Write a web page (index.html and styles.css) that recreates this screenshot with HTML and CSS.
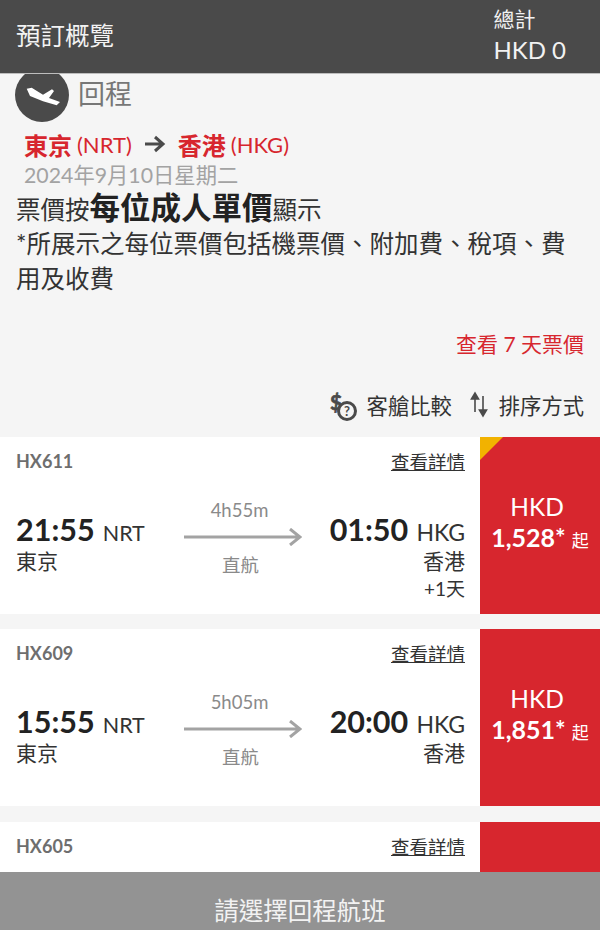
FILE: index.html
```html
<!DOCTYPE html>
<html lang="zh-Hant">
<head>
    <meta charset="UTF-8">
    <meta name="viewport" content="width=device-width, initial-scale=1.0">
    <title>預訂概覽</title>
    <link rel="stylesheet" href="styles.css">
</head>
<body>
    <header class="top-bar">
        <div class="top-title">預訂概覽</div>
        <div class="top-total">
            <div class="total-label">總計</div>
            <div class="total-value">HKD 0</div>
        </div>
    </header>

    <main class="content">
        <div class="leg-head">
            <span class="leg-icon">
                <svg viewBox="0 0 56 56" width="56" height="56">
                    <circle cx="28" cy="28" r="27" fill="#4a4a4a"/>
                    <path d="M12.7 21.7 L17.7 20.7 L29 27.7 L38 22.3 L40 24 L35 31 L46 35 L42.7 38.3 L29 34.3 L16 29 Z" fill="#fff"/>
                </svg>
            </span>
            <span class="leg-name">回程</span>
        </div>
        <div class="route">
            <b>東京</b> (NRT)
            <svg class="route-arrow" viewBox="0 0 24 20" width="24" height="20"><path d="M2 10 H20 M12 3 L20 10 L12 17" fill="none" stroke="#4a4a4a" stroke-width="3"/></svg>
            <b>香港</b> (HKG)
        </div>
        <div class="route-date">2024年9月10日星期二</div>
        <p class="note note-main">票價按<b>每位成人單價</b>顯示</p>
        <p class="note note-sub">*所展示之每位票價包括機票價、附加費、稅項、費用及收費</p>
        <div class="week-link">查看 7 天票價</div>
        <div class="tools">
            <span class="tool">
                <svg class="tool-fare" viewBox="0 0 30 32" width="30" height="32">
                    <text x="1" y="20" class="tool-dollar">$</text>
                    <circle cx="18" cy="21" r="8.5" fill="#f5f5f5" stroke="#4a4a4a" stroke-width="3"/>
                    <text x="18" y="26" class="tool-q">?</text>
                </svg>
                客艙比較
            </span>
            <span class="tool">
                <svg viewBox="0 0 24 30" width="24" height="30">
                    <path d="M8 23 V7 M4.5 10 L8 4 L11.5 10 Z M16 7 V24 M12.5 21 L16 27 L19.5 21 Z" fill="#4a4a4a" stroke="#4a4a4a" stroke-width="1.6"/>
                </svg>
                排序方式
            </span>
        </div>

        <section class="flight">
            <div class="flight-info">
                <div class="flight-top"><span class="flight-no">HX611</span><a class="details">查看詳情</a></div>
                <div class="flight-row">
                    <div class="stop">
                        <div><span class="time">21:55</span> <span class="code">NRT</span></div>
                        <div class="city">東京</div>
                    </div>
                    <div class="path">
                        <div class="duration">4h55m</div>
                        <svg viewBox="0 0 118 18" width="118" height="18"><path d="M0 9 H115 M106 1 L116 9 L106 17" fill="none" stroke="#a3a3a3" stroke-width="3"/></svg>
                        <div class="direct">直航</div>
                    </div>
                    <div class="stop stop-end">
                        <div><span class="time">01:50</span> <span class="code">HKG</span></div>
                        <div class="city">香港</div>
                        <div class="plus-day">+1天</div>
                    </div>
                </div>
            </div>
            <div class="price price-flag">
                <div class="price-cur">HKD</div>
                <div class="price-val">1,528* <small>起</small></div>
            </div>
        </section>

        <section class="flight">
            <div class="flight-info">
                <div class="flight-top"><span class="flight-no">HX609</span><a class="details">查看詳情</a></div>
                <div class="flight-row">
                    <div class="stop">
                        <div><span class="time">15:55</span> <span class="code">NRT</span></div>
                        <div class="city">東京</div>
                    </div>
                    <div class="path">
                        <div class="duration">5h05m</div>
                        <svg viewBox="0 0 118 18" width="118" height="18"><path d="M0 9 H115 M106 1 L116 9 L106 17" fill="none" stroke="#a3a3a3" stroke-width="3"/></svg>
                        <div class="direct">直航</div>
                    </div>
                    <div class="stop stop-end">
                        <div><span class="time">20:00</span> <span class="code">HKG</span></div>
                        <div class="city">香港</div>
                    </div>
                </div>
            </div>
            <div class="price">
                <div class="price-cur">HKD</div>
                <div class="price-val">1,851* <small>起</small></div>
            </div>
        </section>

        <section class="flight flight-cut">
            <div class="flight-info">
                <div class="flight-top"><span class="flight-no">HX605</span><a class="details">查看詳情</a></div>
            </div>
            <div class="price"></div>
        </section>
    </main>

    <footer class="bottom-bar">請選擇回程航班</footer>
</body>
</html>
```

FILE: styles.css
```css
* {
    box-sizing: border-box;
}
html, body {
    height: 100%;
}
body {
    margin: 0;
    height: 930px;
    overflow: hidden;
    display: flex;
    flex-direction: column;
    background-color: #f5f5f5;
    color: #2b2b2b;
    font-family: Lato, "Noto Sans CJK TC", sans-serif;
}
.top-bar {
    height: 74px;
    flex: none;
    display: flex;
    justify-content: space-between;
    background-color: #4a4a4a;
    color: #f2f2f2;
    border-bottom: 1px solid #bdbdbd;
    padding: 0 34px 0 16px;
}
.top-title {
    font-size: 24.5px;
    line-height: 72px;
}
.top-total {
    padding-top: 5px;
}
.total-label {
    font-size: 21px;
    line-height: 28px;
}
.total-value {
    font-size: 24px;
    line-height: 34px;
}
.content {
    flex: 1;
    min-height: 0;
    overflow: hidden;
}
.leg-head {
    display: flex;
    align-items: center;
    gap: 8px;
    height: 48px;
    padding-left: 14px;
}
.leg-icon {
    display: block;
    height: 56px;
    margin-top: -6px;
}
.leg-name {
    font-size: 27px;
    color: #777;
    margin-top: -12px;
}
.route {
    display: flex;
    align-items: center;
    gap: 5px;
    padding-left: 24px;
    margin-top: 6px;
    height: 32px;
    font-size: 22px;
    color: #d7262e;
}
.route b {
    font-weight: 700;
    font-size: 24px;
}
.route-arrow {
    margin: 0 6px;
}
.route-date {
    margin-top: 2px;
    padding-left: 24px;
    font-size: 21.3px;
    line-height: 26px;
    color: #a3a3a3;
}
.note {
    margin: 0;
    padding: 0 16px;
    font-size: 24.5px;
    line-height: 35px;
    color: #333;
}
.note-main {
    margin-top: 4px;
}
.note b {
    font-size: 30.5px;
    line-height: 30px;
    color: #222;
}
.note-sub {
    height: 72px;
    line-height: 34.5px;
}
.week-link {
    margin-top: 28px;
    padding-right: 16px;
    text-align: right;
    font-size: 21px;
    line-height: 34px;
    color: #d7262e;
}
.tools {
    display: flex;
    justify-content: flex-end;
    align-items: center;
    gap: 15px;
    height: 40px;
    margin-top: 23px;
    padding-right: 16px;
    font-size: 21.3px;
    color: #333;
}
.tool {
    display: flex;
    align-items: center;
    gap: 8px;
}
.tool svg {
    overflow: visible;
}
.tool-fare {
    margin-top: 4px;
}
.tool-dollar {
    font-size: 21px;
    font-weight: 700;
    fill: #4a4a4a;
    stroke: #4a4a4a;
    stroke-width: 0.7;
}
.tool-q {
    font-size: 13px;
    font-weight: 700;
    fill: #4a4a4a;
    text-anchor: middle;
}
.flight {
    display: flex;
    height: 177px;
    margin-top: 15px;
    background-color: #fff;
}
.tools + .flight {
    margin-top: 13px;
}
.flight-cut {
    height: 60px;
    margin-top: 16px;
}
.flight-info {
    flex: 1;
    padding: 11px 15px 0 16px;
}
.flight-top {
    display: flex;
    justify-content: space-between;
    align-items: center;
    height: 26px;
}
.flight-no {
    font-size: 18px;
    font-weight: 700;
    color: #6e6e6e;
}
.details {
    font-size: 18.5px;
    color: #333;
    text-decoration: underline;
}
.flight-row {
    display: flex;
    justify-content: space-between;
    margin-top: 24px;
}
.stop {
    width: 150px;
    padding-top: 14px;
}
.stop-end {
    text-align: right;
}
.time {
    font-size: 30.5px;
    font-weight: 700;
    color: #222;
    line-height: 34px;
}
.code {
    margin-left: 4px;
    font-size: 21.5px;
    color: #333;
}
.stop-end .code {
    font-size: 23px;
}
.city {
    margin-top: 1px;
    font-size: 21px;
    line-height: 28px;
    color: #333;
}
.plus-day {
    font-size: 19px;
    line-height: 28px;
    color: #333;
}
.path {
    width: 118px;
    text-align: center;
    color: #8a8a8a;
    font-size: 18.5px;
}
.path svg {
    display: block;
    margin: 4px 0 0 2px;
}
.duration {
    padding-right: 2px;
    line-height: 24px;
    margin-bottom: 6px;
}
.direct {
    margin-top: 7px;
    line-height: 24px;
}
.price {
    position: relative;
    width: 120px;
    flex: none;
    padding-top: 55px;
    text-align: center;
    color: #fff;
    background-color: #d7262e;
}
.price-flag::before {
    content: '';
    position: absolute;
    top: 0;
    left: 0;
    border-top: 23px solid #f2b200;
    border-right: 23px solid transparent;
}
.price-cur {
    padding-right: 6px;
    font-size: 24.5px;
    line-height: 30px;
}
.price-val {
    font-size: 25px;
    font-weight: 700;
    line-height: 30px;
}
.price-val small {
    font-size: 17px;
    font-weight: 400;
}
.bottom-bar {
    height: 58px;
    flex: none;
    text-align: center;
    font-size: 24.5px;
    line-height: 78px;
    color: #f2f2f2;
    background-color: #939393;
}
```
